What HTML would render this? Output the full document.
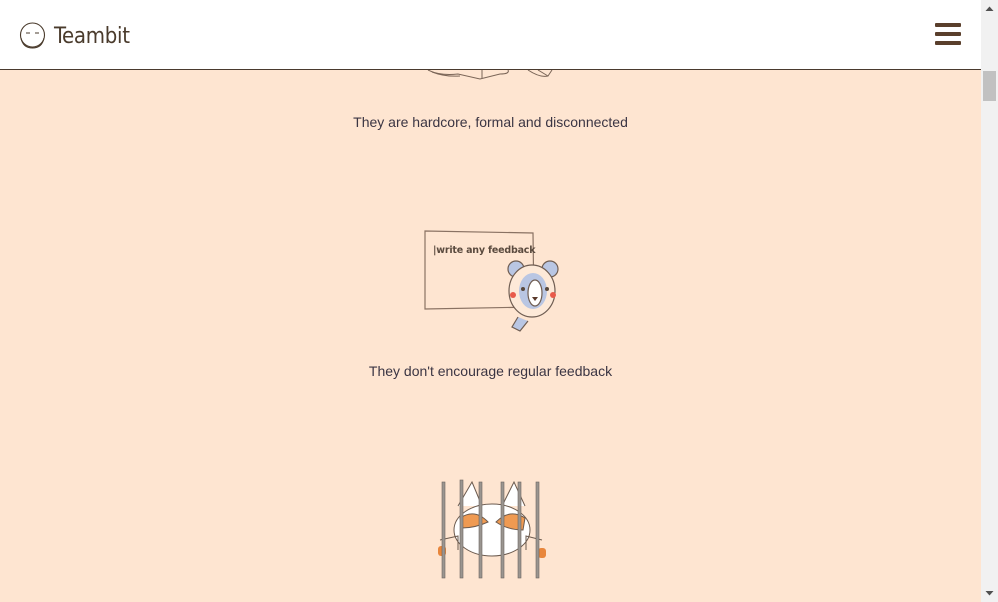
<!DOCTYPE html>
<html><head><meta charset="utf-8"><style>
*{margin:0;padding:0;box-sizing:border-box}
html,body{width:998px;height:602px;overflow:hidden}
body{background:#fee5d1;font-family:"Liberation Sans",Arial,sans-serif;position:relative}
.hdr{position:absolute;left:0;top:0;width:981px;height:70px;background:#fff;border-bottom:1px solid #4a3a2e}
.logo{position:absolute;left:54px;top:24px;font-size:22px;color:#4a3b2c;font-family:"DejaVu Sans Condensed","Liberation Sans",sans-serif;letter-spacing:-0.3px}
.bar{position:absolute;left:935px;width:26px;height:4px;background:#5a3f2c;border-radius:1px}
.sb{position:absolute;left:981px;top:0;width:17px;height:602px;background:#f1f1f1}
.thumb{position:absolute;left:983px;top:71px;width:13px;height:30px;background:#c1c1c1}
.cap{position:absolute;left:0;width:981px;text-align:center;font-size:14px;color:#3b3543}
</style></head><body>
<svg style="position:absolute;left:420px;top:70px" width="140" height="12"><g fill="none" stroke="#7a6557" stroke-width="1"><path d="M8 0 Q20 6 38 4 L60 9 L80 4 Q90 4 88 0"/><path d="M12 2 Q25 7 40 6"/><path d="M62 8 L62 0"/><path d="M118 0 L128 6 L132 0"/><path d="M108 0 Q120 8 128 6"/></g></svg>
<div class="cap" style="top:114px">They are hardcore, formal and disconnected</div>
<svg style="position:absolute;left:420px;top:225px" width="145" height="110">
<path d="M5 6 L113 8 L114 82 L5 84 Z" fill="#fee5d1" stroke="#8a7263" stroke-width="1.2"/>
<text x="13" y="28" font-family="DejaVu Sans,sans-serif" font-size="9.5" font-weight="bold" fill="#5a4a3e" letter-spacing="-0.2">|write any feedback</text>
<g stroke="#6f5d52" stroke-width="1.2">
<circle cx="96" cy="44" r="8" fill="#b9c6e3"/><circle cx="130" cy="44" r="8" fill="#b9c6e3"/>
<ellipse cx="112" cy="66" rx="23" ry="26" fill="#fde9d8"/>
<ellipse cx="113" cy="66" rx="14" ry="18" fill="#b9c6e3" stroke="none"/>
<ellipse cx="115" cy="68" rx="7" ry="13" fill="#fff"/>
<path d="M98 92 L92 102 L100 106 L108 96" fill="#b9c6e3"/>
</g>
<circle cx="93" cy="70" r="3" fill="#e85a4a"/><circle cx="133" cy="70" r="3" fill="#e85a4a"/>
<circle cx="103" cy="64" r="2" fill="#5a4a3e"/><circle cx="127" cy="64" r="2" fill="#5a4a3e"/>
<path d="M112 72 l3 4 l3 -4z" fill="#5a3a2c"/>
</svg>
<div class="cap" style="top:363px">They don't encourage regular feedback</div>
<svg style="position:absolute;left:430px;top:478px" width="125" height="105">
<g stroke="#6b5a4e" stroke-width="1">
<path d="M28 28 L42 4 L52 28 M72 28 L84 4 L95 28" fill="#fff"/>
<ellipse cx="62" cy="52" rx="38" ry="26" fill="#fff"/>
<path d="M30 40 Q45 30 58 44 Q45 50 32 50Z M66 44 Q80 30 95 40 L93 52 Q78 52 66 44Z" fill="#ef9a52"/>
<path d="M10 62 L28 58 L28 72 M112 62 L96 58 L96 72" fill="none"/>
</g>
<rect x="8" y="68" width="8" height="10" rx="3" fill="#e8863c"/>
<rect x="108" y="70" width="8" height="10" rx="3" fill="#e8863c"/>
<g fill="#9a9590" stroke="#6b6560" stroke-width="0.6">
<rect x="12" y="4" width="3" height="96"/><rect x="30" y="2" width="3" height="98"/><rect x="49" y="4" width="3" height="96"/><rect x="71" y="4" width="3" height="96"/><rect x="88" y="4" width="3" height="96"/><rect x="106" y="4" width="3" height="96"/>
</g>
</svg>
<div class="hdr">
<svg style="position:absolute;left:18px;top:22px" width="30" height="28"><g fill="none" stroke="#4a3b2c" stroke-width="1.1"><circle cx="14.5" cy="13" r="12"/><path d="M3 16 Q5 26 14.5 26 Q24 26 26 16"/><path d="M8 11 h4 M17 11 h4"/></g></svg>
<div class="logo">Teambit</div>
<div class="bar" style="top:23px"></div><div class="bar" style="top:32px"></div><div class="bar" style="top:41px"></div>
</div>
<div class="sb"></div><div class="thumb"></div>
<svg style="position:absolute;left:985px;top:6px" width="9" height="6"><path d="M0.5 5 L4.5 0.5 L8.5 5Z" fill="#505050"/></svg>
<svg style="position:absolute;left:985px;top:590px" width="9" height="6"><path d="M0.5 1 L4.5 5.5 L8.5 1Z" fill="#505050"/></svg>
</body></html>
